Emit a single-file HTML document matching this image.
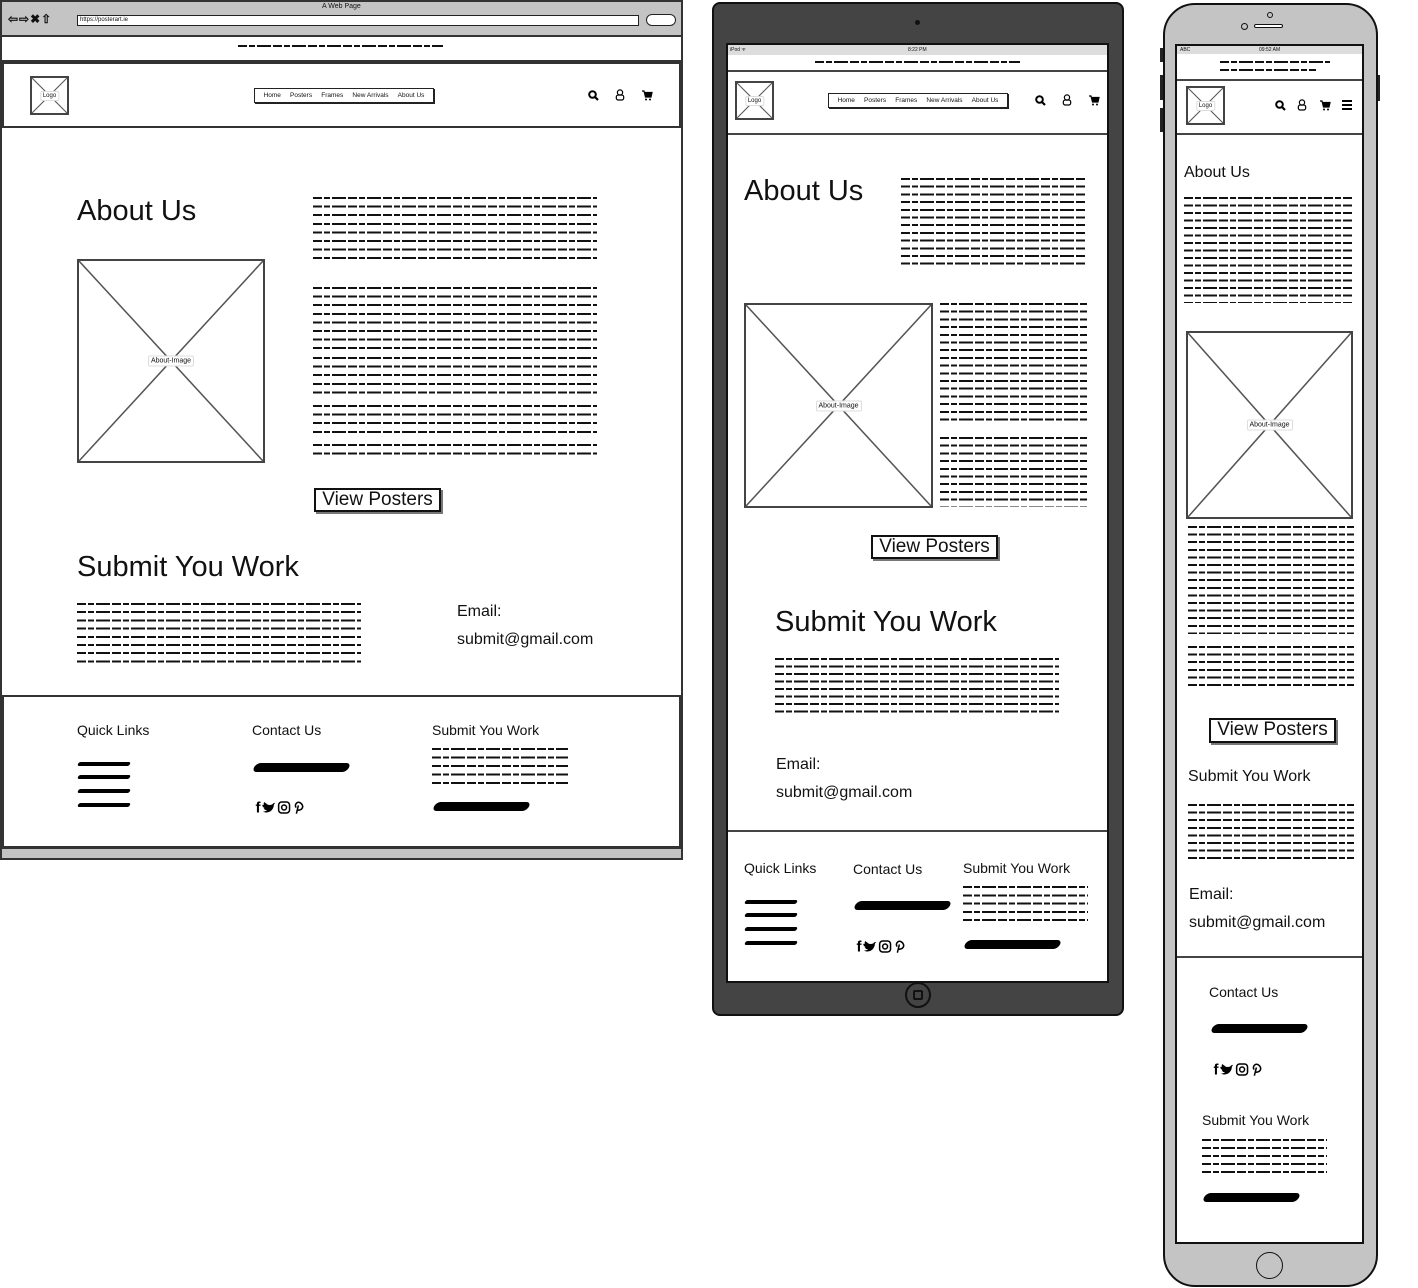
<!DOCTYPE html>
<html><head><meta charset="utf-8"><style>
*{margin:0;padding:0;box-sizing:border-box}
body{width:1418px;height:1288px;background:#fff;position:relative;overflow:hidden;font-family:"Liberation Sans",sans-serif;color:#111}
.a{position:absolute}
.t{position:absolute;--p:8.5px;background:repeating-linear-gradient(to bottom,#111 0 2px,transparent 2px var(--p));-webkit-mask-image:repeating-linear-gradient(to right,#000 0 9px,transparent 9px 11px,#000 11px 17px,transparent 17px 19px,#000 19px 33px,transparent 33px 35px);mask-image:repeating-linear-gradient(to right,#000 0 9px,transparent 9px 11px,#000 11px 17px,transparent 17px 19px,#000 19px 33px,transparent 33px 35px)}
.s{position:absolute;height:9px;background:#000;border-radius:5px;transform:skewX(-25deg)}
.s2{position:absolute;height:4px;background:#000;border-radius:3px;transform:skewX(-25deg)}
.ph{position:absolute;border:2px solid #444;background:#fff}
.ph svg{position:absolute;left:0;top:0;width:100%;height:100%}
.ph span{position:absolute;left:50%;top:50%;transform:translate(-50%,-50%);font-size:7px;background:#fff;border:1px solid #ddd;border-radius:2px;padding:1px 2px;white-space:nowrap}
.nav{position:absolute;border:1.5px solid #222;box-shadow:1px 1px 0 #222;font-size:6.5px;display:flex;align-items:center;justify-content:space-around;padding:0 4px;background:#fff}
.btn{position:absolute;border:2px solid #111;box-shadow:2px 2px 0 #777;font-size:19px;text-align:center;line-height:20px;background:#fff}
.h1{position:absolute;font-size:29px;white-space:nowrap}
.h3{position:absolute;font-size:14px;white-space:nowrap}
.em{position:absolute;font-size:16px;white-space:nowrap}
</style></head><body>
<svg width="0" height="0" style="position:absolute"><defs>
<g id="srch"><circle cx="4.5" cy="4.5" r="3.3" fill="none" stroke="#000" stroke-width="2"/><path d="M7 7l3 3" stroke="#000" stroke-width="2.2"/></g>
<g id="usr"><circle cx="5" cy="3.5" r="2.6" fill="none" stroke="#000" stroke-width="1.2"/><rect x="1.3" y="6" width="7.4" height="5" rx="2" fill="none" stroke="#000" stroke-width="1.2"/></g>
<g id="cart"><path d="M0 1h2l1.5 6h5.5l1-4.5H3" fill="#000" stroke="#000" stroke-width="1.2"/><circle cx="4" cy="9.5" r="1" fill="#000"/><circle cx="8" cy="9.5" r="1" fill="#000"/></g>
<g id="soc"><text x="0" y="9" font-size="11" font-family="Liberation Sans" font-weight="bold">f</text><path d="M8 3c2 1 4 1 5-.5l1.5-.5-1 1.5c0 4-4 7-8 5 2 0 3-1 3-1-2 0-2-1-2.5-1.5h1c-1.5-.5-2-1.5-2-2.5l1 .3C6 3 6 2 6.5 1.5 7.5 2.5 9 3.5 11 3.5" fill="#000"/><rect x="17" y="1.5" width="8" height="8" rx="2.2" fill="none" stroke="#000" stroke-width="1.1"/><circle cx="21" cy="5.5" r="1.8" fill="none" stroke="#000" stroke-width="1.1"/><path d="M30 10l1.5-6M31 7.5c3 0 4-2 3.5-3.5S32 1 30.5 2s-1.5 3 -.5 3.5" fill="none" stroke="#000" stroke-width="1.1"/></g>
</defs></svg>

<!-- ============ DESKTOP ============ -->
<div class="a" style="left:0;top:0;width:683px;height:860px;border:2px solid #333;background:#fff"></div>
<div class="a" style="left:0;top:0;width:683px;height:37px;background:#c4c4c4;border:2px solid #333"></div>
<div class="a" style="left:322px;top:3px;font-size:7px">A Web Page</div>
<div class="a" style="left:8px;top:12px;font-size:12px;font-weight:bold;letter-spacing:1px">⇦⇨✖⇧</div>
<div class="a" style="left:77px;top:15px;width:562px;height:11px;border:1.5px solid #222;background:#fff;font-size:6px;padding-left:2px;line-height:8px">https://posterart.ie</div>
<div class="a" style="left:646px;top:14px;width:30px;height:12px;border:1.5px solid #222;border-radius:6px;background:#fff"></div>
<div class="t" style="left:238px;top:45px;width:205px;height:3px"></div>
<div class="a" style="left:0;top:60px;width:683px;height:2px;background:#333"></div>
<div class="a" style="left:2px;top:62px;width:679px;height:66px;border:2px solid #333"></div>
<div class="ph" style="left:30px;top:76px;width:39px;height:39px"><svg viewBox="0 0 10 10" preserveAspectRatio="none"><path d="M0 0L10 10M10 0L0 10" stroke="#555" stroke-width=".3"/></svg><span style="font-size:6px">Logo</span></div>
<div class="nav" style="left:254px;top:88px;width:180px;height:15px"><span>Home</span><span>Posters</span><span>Frames</span><span>New Arrivals</span><span>About Us</span></div>
<svg class="a" style="left:588px;top:90px" width="12" height="12"><use href="#srch"/></svg>
<svg class="a" style="left:615px;top:89px" width="11" height="13"><use href="#usr"/></svg>
<svg class="a" style="left:642px;top:90px" width="11" height="12"><use href="#cart"/></svg>

<div class="h1" style="left:77px;top:195px">About Us</div>
<div class="t" style="left:313px;top:197px;width:284px;height:62px;--p:8.6px"></div>
<div class="t" style="left:313px;top:287px;width:284px;height:62px;--p:8.6px"></div>
<div class="t" style="left:313px;top:357px;width:284px;height:38px;--p:8.6px"></div>
<div class="t" style="left:313px;top:405px;width:284px;height:30px;--p:8.6px"></div>
<div class="t" style="left:313px;top:444px;width:284px;height:14px;--p:8.6px"></div>
<div class="ph" style="left:77px;top:259px;width:188px;height:204px"><svg viewBox="0 0 10 10" preserveAspectRatio="none"><path d="M0 0L10 10M10 0L0 10" stroke="#555" stroke-width=".08"/></svg><span>About-Image</span></div>
<div class="btn" style="left:314px;top:488px;width:127px;height:24px">View Posters</div>
<div class="h1" style="left:77px;top:551px">Submit You Work</div>
<div class="t" style="left:77px;top:603px;width:284px;height:62px;--p:8.2px"></div>
<div class="em" style="left:457px;top:603px">Email:</div>
<div class="em" style="left:457px;top:631px">submit@gmail.com</div>

<div class="a" style="left:2px;top:695px;width:679px;height:153px;border:2px solid #333"></div>
<div class="h3" style="left:77px;top:722px">Quick Links</div>
<div class="s2" style="left:78px;top:762px;width:52px"></div>
<div class="s2" style="left:78px;top:775px;width:52px"></div>
<div class="s2" style="left:78px;top:789px;width:52px"></div>
<div class="s2" style="left:78px;top:803px;width:52px"></div>
<div class="h3" style="left:252px;top:722px">Contact Us</div>
<div class="s" style="left:254px;top:763px;width:95px"></div>
<svg class="a" style="left:254px;top:800px" width="52" height="15" viewBox="0 0 36 11"><use href="#soc"/></svg>
<div class="h3" style="left:432px;top:722px">Submit You Work</div>
<div class="t" style="left:432px;top:748px;width:136px;height:38px;--p:8.5px"></div>
<div class="s" style="left:434px;top:802px;width:95px"></div>
<div class="a" style="left:0;top:847px;width:683px;height:13px;background:#c4c4c4;border:2px solid #333"></div>

<!-- ============ TABLET ============ -->
<div class="a" style="left:712px;top:2px;width:412px;height:1014px;background:#444;border:2px solid #111;border-radius:8px"></div>
<div class="a" style="left:915px;top:20px;width:5px;height:5px;border-radius:50%;background:#111"></div>
<div class="a" style="left:726px;top:43px;width:383px;height:940px;background:#fff;border:2px solid #111"></div>
<div class="a" style="left:728px;top:45px;width:379px;height:10px;background:#ddd;font-size:5px;line-height:10px;padding-left:2px">iPod ᯤ<span style="position:absolute;left:180px">8:22 PM</span></div>
<div class="t" style="left:815px;top:61px;width:205px;height:3px"></div>
<div class="a" style="left:728px;top:70px;width:379px;height:1.5px;background:#444"></div>
<div class="a" style="left:728px;top:133px;width:379px;height:1.5px;background:#444"></div>
<div class="ph" style="left:735px;top:81px;width:39px;height:39px"><svg viewBox="0 0 10 10" preserveAspectRatio="none"><path d="M0 0L10 10M10 0L0 10" stroke="#555" stroke-width=".3"/></svg><span style="font-size:6px">Logo</span></div>
<div class="nav" style="left:828px;top:93px;width:180px;height:15px"><span>Home</span><span>Posters</span><span>Frames</span><span>New Arrivals</span><span>About Us</span></div>
<svg class="a" style="left:1035px;top:95px" width="12" height="12"><use href="#srch"/></svg>
<svg class="a" style="left:1062px;top:94px" width="11" height="13"><use href="#usr"/></svg>
<svg class="a" style="left:1089px;top:95px" width="11" height="12"><use href="#cart"/></svg>
<div class="h1" style="left:744px;top:175px">About Us</div>
<div class="t" style="left:901px;top:178px;width:184px;height:92px;--p:7.7px"></div>
<div class="ph" style="left:744px;top:303px;width:189px;height:205px"><svg viewBox="0 0 10 10" preserveAspectRatio="none"><path d="M0 0L10 10M10 0L0 10" stroke="#555" stroke-width=".08"/></svg><span>About-Image</span></div>
<div class="t" style="left:940px;top:303px;width:147px;height:123px;--p:7.7px"></div>
<div class="t" style="left:940px;top:437px;width:147px;height:70px;--p:7.7px"></div>
<div class="btn" style="left:871px;top:535px;width:127px;height:24px">View Posters</div>
<div class="h1" style="left:775px;top:606px">Submit You Work</div>
<div class="t" style="left:775px;top:658px;width:284px;height:60px;--p:7.5px"></div>
<div class="em" style="left:776px;top:756px">Email:</div>
<div class="em" style="left:776px;top:784px">submit@gmail.com</div>
<div class="a" style="left:728px;top:830px;width:379px;height:1.5px;background:#444"></div>
<div class="h3" style="left:744px;top:860px">Quick Links</div>
<div class="s2" style="left:745px;top:900px;width:52px"></div>
<div class="s2" style="left:745px;top:913px;width:52px"></div>
<div class="s2" style="left:745px;top:927px;width:52px"></div>
<div class="s2" style="left:745px;top:941px;width:52px"></div>
<div class="h3" style="left:853px;top:861px">Contact Us</div>
<div class="s" style="left:855px;top:901px;width:95px"></div>
<svg class="a" style="left:855px;top:939px" width="52" height="15" viewBox="0 0 36 11"><use href="#soc"/></svg>
<div class="h3" style="left:963px;top:860px">Submit You Work</div>
<div class="t" style="left:963px;top:886px;width:125px;height:37px;--p:8.3px"></div>
<div class="s" style="left:965px;top:940px;width:95px"></div>
<div class="a" style="left:905px;top:982px;width:26px;height:26px;border-radius:50%;border:2px solid #111"></div>
<div class="a" style="left:913px;top:990px;width:10px;height:10px;border-radius:2px;border:2px solid #111"></div>

<!-- ============ PHONE ============ -->
<div class="a" style="left:1160px;top:48px;width:5px;height:14px;background:#222"></div>
<div class="a" style="left:1160px;top:75px;width:5px;height:25px;background:#222"></div>
<div class="a" style="left:1160px;top:108px;width:5px;height:24px;background:#222"></div>
<div class="a" style="left:1375px;top:75px;width:5px;height:26px;background:#222"></div>
<div class="a" style="left:1163px;top:3px;width:215px;height:1284px;background:#c4c4c4;border:2px solid #111;border-radius:32px"></div>
<div class="a" style="left:1267px;top:12px;width:6px;height:6px;border-radius:50%;border:1.5px solid #111"></div>
<div class="a" style="left:1241px;top:23px;width:7px;height:7px;border-radius:50%;border:1.5px solid #111"></div>
<div class="a" style="left:1254px;top:24px;width:29px;height:4px;border-radius:2px;border:1.5px solid #111;background:#fff"></div>
<div class="a" style="left:1175px;top:44px;width:189px;height:1200px;background:#fff;border:2px solid #111"></div>
<div class="a" style="left:1177px;top:46px;width:185px;height:8px;background:#ddd;font-size:5px;line-height:8px;padding-left:3px">ABC<span style="position:absolute;left:82px">09:52 AM</span></div>
<div class="t" style="left:1220px;top:61px;width:110px;height:3px"></div>
<div class="t" style="left:1220px;top:69px;width:96px;height:3px"></div>
<div class="a" style="left:1177px;top:79px;width:185px;height:1.5px;background:#444"></div>
<div class="a" style="left:1177px;top:133px;width:185px;height:1.5px;background:#444"></div>
<div class="ph" style="left:1186px;top:86px;width:39px;height:39px"><svg viewBox="0 0 10 10" preserveAspectRatio="none"><path d="M0 0L10 10M10 0L0 10" stroke="#555" stroke-width=".3"/></svg><span style="font-size:6px">Logo</span></div>
<svg class="a" style="left:1275px;top:100px" width="12" height="12"><use href="#srch"/></svg>
<svg class="a" style="left:1297px;top:99px" width="11" height="13"><use href="#usr"/></svg>
<svg class="a" style="left:1320px;top:100px" width="11" height="12"><use href="#cart"/></svg>
<div class="a" style="left:1342px;top:100px;width:10px;height:10px;background:repeating-linear-gradient(#000 0 2px,transparent 2px 4px)"></div>
<div class="em" style="left:1184px;top:164px">About Us</div>
<div class="t" style="left:1184px;top:197px;width:168px;height:106px;--p:7.5px"></div>
<div class="ph" style="left:1186px;top:331px;width:167px;height:188px"><svg viewBox="0 0 10 10" preserveAspectRatio="none"><path d="M0 0L10 10M10 0L0 10" stroke="#555" stroke-width=".09"/></svg><span>About-Image</span></div>
<div class="t" style="left:1188px;top:526px;width:166px;height:108px;--p:7.6px"></div>
<div class="t" style="left:1188px;top:646px;width:166px;height:45px;--p:7.6px"></div>
<div class="btn" style="left:1209px;top:718px;width:127px;height:25px">View Posters</div>
<div class="em" style="left:1188px;top:768px">Submit You Work</div>
<div class="t" style="left:1188px;top:804px;width:166px;height:59px;--p:7.6px"></div>
<div class="em" style="left:1189px;top:886px">Email:</div>
<div class="em" style="left:1189px;top:914px">submit@gmail.com</div>
<div class="a" style="left:1177px;top:956px;width:185px;height:1.5px;background:#444"></div>
<div class="h3" style="left:1209px;top:984px">Contact Us</div>
<div class="s" style="left:1212px;top:1024px;width:95px"></div>
<svg class="a" style="left:1212px;top:1062px" width="52" height="15" viewBox="0 0 36 11"><use href="#soc"/></svg>
<div class="h3" style="left:1202px;top:1112px">Submit You Work</div>
<div class="t" style="left:1202px;top:1139px;width:125px;height:35px;--p:8px"></div>
<div class="s" style="left:1204px;top:1193px;width:95px"></div>
<div class="a" style="left:1256px;top:1252px;width:27px;height:27px;border-radius:50%;border:1.5px solid #111"></div>
</body></html>
